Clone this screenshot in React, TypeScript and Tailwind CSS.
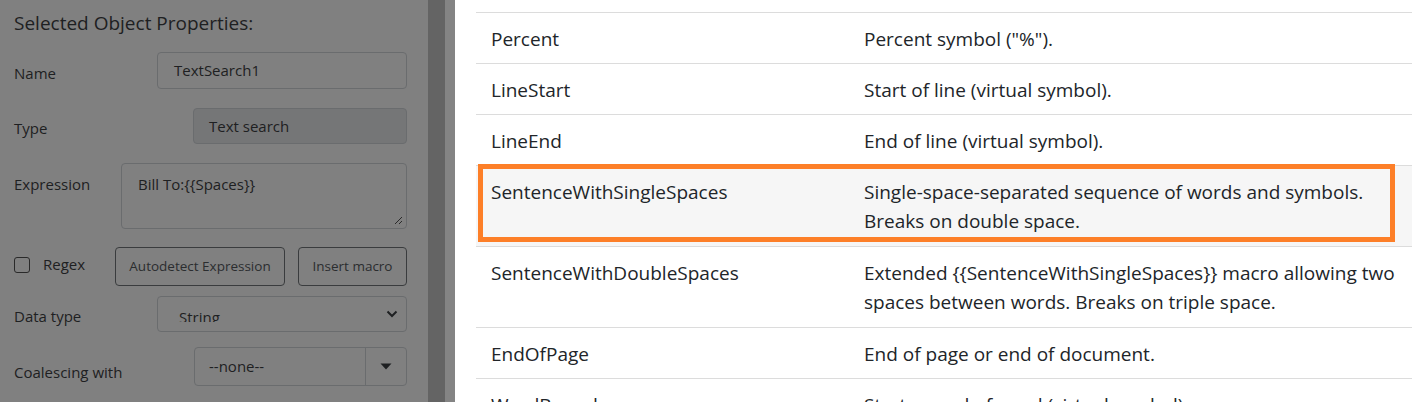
import React from "react";

const rows: { name: string; desc: string[]; highlight?: boolean }[] = [
  { name: "Percent", desc: ['Percent symbol ("%").'] },
  { name: "LineStart", desc: ["Start of line (virtual symbol)."] },
  { name: "LineEnd", desc: ["End of line (virtual symbol)."] },
  {
    name: "SentenceWithSingleSpaces",
    desc: ["Single-space-separated sequence of words and symbols.", "Breaks on double space."],
    highlight: true,
  },
  {
    name: "SentenceWithDoubleSpaces",
    desc: ["Extended {{SentenceWithSingleSpaces}} macro allowing two", "spaces between words. Breaks on triple space."],
  },
  { name: "EndOfPage", desc: ["End of page or end of document."] },
  { name: "WordBoundary", desc: ["Start or end of word (virtual symbol)."] },
];

const font = { fontFamily: '"Segoe UI", "Open Sans", "Noto Sans", sans-serif' };

const App: React.FC = () => {
  return (
    <div className="flex h-[402px] w-[1426px] overflow-hidden" style={font}>
      {/* Left: properties panel under modal backdrop */}
      <div className="w-[428px] shrink-0 bg-[#808080] pl-[14px] pr-[21px] text-[#1e2022]">
        <div className="pt-[9px] text-[19px] leading-[28px]">Selected Object Properties:</div>

        <div className="mt-[15px] flex h-[37px] items-center justify-between">
          <span className="mt-[5px] text-[15px]">Name</span>
          <div className="flex h-[37px] w-[250px] items-center rounded-[4px] border border-[#6a6c6e] px-[16px] text-[15px]">
            TextSearch1
          </div>
        </div>

        <div className="mt-[19px] flex h-[36px] items-center justify-between">
          <span className="mt-[4px] text-[15px]">Type</span>
          <div className="flex h-[36px] w-[214px] items-center rounded-[4px] border border-[#6a6c6e] bg-[#757677] px-[15px] text-[15px]">
            Text search
          </div>
        </div>

        <div className="mt-[19px] flex items-start justify-between">
          <span className="mt-[10px] text-[15px]">Expression</span>
          <div className="relative h-[66px] w-[286px] rounded-[4px] border border-[#6a6c6e] px-[16px] pt-[9px] text-[15px]">
            Bill To:{"{{"}Spaces{"}}"}
            <svg className="absolute bottom-[3px] right-[3px]" width="9" height="9" viewBox="0 0 9 9">
              <path d="M8 1 L1 8 M8 5 L5 8" stroke="#2a2a2a" strokeWidth="1" />
            </svg>
          </div>
        </div>

        <div className="mt-[18px] flex h-[39px] items-center justify-between">
          <div className="flex items-center">
            <span className="mt-[-4px] h-[16px] w-[16px] rounded-[3px] border border-[#2a2a2a]" />
            <span className="ml-[13px] mt-[-4px] text-[15px]">Regex</span>
          </div>
          <div className="flex gap-[13px]">
            <div className="flex h-[39px] w-[170px] items-center justify-center rounded-[4px] border border-[#3a3c3e] text-[13.5px] text-[#2b2d2f]">
              Autodetect Expression
            </div>
            <div className="flex h-[39px] w-[109px] items-center justify-center rounded-[4px] border border-[#3a3c3e] text-[13.5px] text-[#2b2d2f]">
              Insert macro
            </div>
          </div>
        </div>

        <div className="mt-[10px] flex h-[36px] items-center justify-between">
          <span className="mt-[5px] text-[15px]">Data type</span>
          <div className="relative h-[36px] w-[250px] rounded-[4px] border border-[#6a6c6e] pl-[21px] pt-[11px] text-[15px]">
            <div className="h-[14px] overflow-hidden leading-[18px]">String</div>
            <svg className="absolute right-[8px] top-[12px]" width="12" height="10" viewBox="0 0 12 10">
              <path d="M1.5 2.5 L6 7 L10.5 2.5" stroke="#1e2022" strokeWidth="2" fill="none" />
            </svg>
          </div>
        </div>

        <div className="mt-[15px] flex h-[39px] items-center justify-between">
          <span className="mt-[12px] text-[15px]">Coalescing with</span>
          <div className="flex h-[39px] w-[213px] items-center rounded-[4px] border border-[#6a6c6e] text-[15px]">
            <span className="flex-1 pl-[14px]">--none--</span>
            <div className="flex h-full w-[41px] items-center justify-center border-l border-[#6a6c6e]">
              <svg width="12" height="7" viewBox="0 0 12 7">
                <path d="M0.5 0.5 L11.5 0.5 L6 6.5 Z" fill="#1e2022" />
              </svg>
            </div>
          </div>
        </div>
      </div>

      {/* Divider strips */}
      <div className="w-[17px] shrink-0 bg-[#646464]" />
      <div className="w-[10px] shrink-0 bg-[#848484]" />

      {/* Right: macro table */}
      <div className="flex-1 bg-white pl-[21px] pr-[14px] pt-[12px] text-[#212529]">
        <div className="border-t border-[#dcdcdc]">
          {rows.map((r) => (
            <div
              key={r.name}
              className={`relative flex border-b border-[#dcdcdc] text-[19px] leading-[29px] ${
                r.desc.length > 1 ? "pb-[10px] pt-[12px]" : "pb-[9.5px] pt-[11.5px]"
              } ${r.highlight ? "bg-[#f6f6f6]" : ""}`}
            >
              <div className="w-[373px] shrink-0 pl-[15px]">{r.name}</div>
              <div className="flex-1 pl-[15px]">
                {r.desc.map((d) => (
                  <div key={d}>{d}</div>
                ))}
              </div>
              {r.highlight && (
                <div className="pointer-events-none absolute bottom-[4px] left-[2px] right-[17px] top-[-2px] border-[5px] border-[#fd7f28]" />
              )}
            </div>
          ))}
        </div>
      </div>
    </div>
  );
};

export default App;
